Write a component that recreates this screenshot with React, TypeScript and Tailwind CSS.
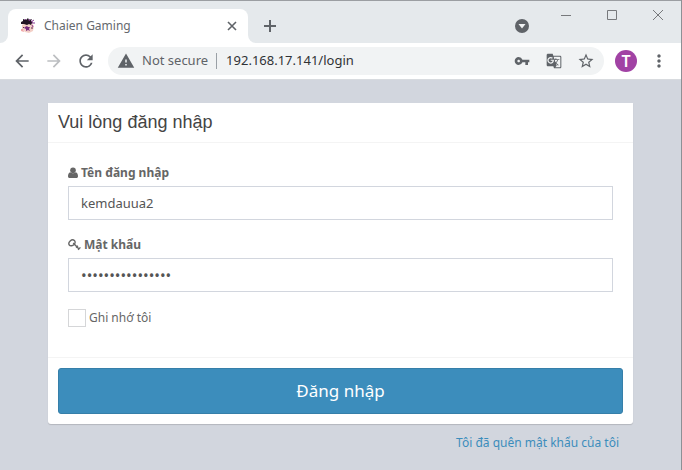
import { useState } from 'react';
import type { ReactNode } from 'react';
import { MdArrowBack, MdArrowForward, MdGTranslate, MdMoreVert, MdRefresh, MdStarBorder, MdVpnKey, MdWarning } from 'react-icons/md';

function IconButton({ label, className = '', children }: { label: string; className?: string; children: ReactNode }) {
  return (
    <button type="button" aria-label={label} className={`flex shrink-0 items-center justify-center ${className}`}>
      {children}
    </button>
  );
}

function Favicon() {
  return (
    <svg viewBox="0 0 16 16" className="size-4 shrink-0" aria-hidden="true">
      <path d="M2 7 4 5l8 0 2 3-1 5-4 2-4-1-3-3 0-2z" fill="#f3cfc6" />
      <path d="M1 6 1 4l2-1 0-2 3 1 2-2 1 2 3-1-1 2 2 1-1 1-1 2-2-1-2 1-3-1-2 0z" fill="#231424" />
      <path d="m5 1 1 1M10 1 9 3M14 2l-3 2M12 5l3 0M12 7l1 2" stroke="#8d3a96" strokeWidth="1" />
      <path d="m5 9 2-1 1 1 2 0-1 2 1 2-2-1-2 1 0-2-2-1z" fill="#7b2b7f" />
      <path d="m11 10 2 0M3 9l1 1" stroke="#5a2b4c" strokeWidth="1" />
      <path d="M1 11h2l1 3-3-1z" fill="#f0a8a8" />
    </svg>
  );
}

function TabStrip() {
  return (
    <div className="flex h-[43px] border-t border-[#9b9ea2] bg-[#e5e9ec]">
      <div className="flex w-2 shrink-0 items-end bg-white">
        <span className="h-full w-full rounded-br-lg bg-[#e5e9ec]" />
      </div>
      <div className="mt-2 flex w-60 items-center rounded-t-lg bg-white pr-2 pl-3">
        <Favicon />
        <span className="ml-2 flex-1 text-[12px] text-[#65696e]">Chaien Gaming</span>
        <IconButton label="Close tab" className="size-4">
          <svg viewBox="0 0 16 16" className="size-4" stroke="#5f6368" strokeWidth="1.6"><path d="m4 4 8 8M12 4l-8 8" /></svg>
        </IconButton>
      </div>
      <div className="w-2 shrink-0 bg-white">
        <span className="block h-full w-full rounded-bl-lg bg-[#e5e9ec]" />
      </div>
      <IconButton label="New tab" className="mt-[17px] ml-[6px] size-4 self-start">
        <svg viewBox="0 0 16 16" className="size-4" stroke="#5f6368" strokeWidth="2"><path d="M8 2v12M2 8h12" /></svg>
      </IconButton>
      <div className="flex-1" />
      <IconButton label="Search tabs" className="mt-[17px] size-4 self-start">
        <svg viewBox="0 0 16 16" className="size-4"><circle cx="8" cy="8" r="7" fill="#5f6368" /><path d="M4.500 6h7L8 10.500z" fill="#f1f3f4" /></svg>
      </IconButton>
      <div className="flex h-7 pl-[13px] text-[#77797c]">
        <IconButton label="Minimize" className="w-[46px]">
          <svg viewBox="0 0 12 12" className="size-3" stroke="currentColor"><path d="M1 6.500h10" /></svg>
        </IconButton>
        <IconButton label="Maximize" className="w-[46px]">
          <svg viewBox="0 0 12 12" className="size-3" fill="none" stroke="currentColor"><path d="M1.500 1.500h9v9h-9z" /></svg>
        </IconButton>
        <IconButton label="Close" className="w-[46px]">
          <svg viewBox="0 0 12 12" className="size-3" stroke="currentColor"><path d="m1 1 10 10M11 1 1 11" /></svg>
        </IconButton>
      </div>
    </div>
  );
}

function Toolbar() {
  return (
    <div className="flex h-[37px] items-center border-b border-[#d8dbdf] bg-white px-3 text-[#5f6368]">
      <IconButton label="Back" className="size-5"><MdArrowBack size={20} /></IconButton>
      <IconButton label="Forward" className="ml-3 size-5 text-[#bcbec1]"><MdArrowForward size={20} /></IconButton>
      <IconButton label="Reload" className="ml-3 size-5"><MdRefresh size={20} /></IconButton>
      <div className="ml-3 flex h-7 flex-1 items-center rounded-full bg-[#f1f3f4] px-[9px]">
        <MdWarning size={18} className="shrink-0" />
        <span className="ml-[7px] shrink-0 text-[13px]">Not secure</span>
        <span className="mr-[9px] ml-2 h-4 w-px shrink-0 bg-[#9aa0a6]" />
        <input
          aria-label="Address"
          defaultValue="192.168.17.141/login"
          className="w-0 min-w-0 flex-1 bg-transparent text-[13px] text-[#303236] outline-none"
        />
        <IconButton label="Saved password" className="size-4"><MdVpnKey size={16} /></IconButton>
        <IconButton label="Translate" className="ml-4 size-4"><MdGTranslate size={16} /></IconButton>
        <IconButton label="Bookmark" className="ml-[15px] size-[18px]"><MdStarBorder size={18} /></IconButton>
      </div>
      <IconButton label="Profile" className="ml-[11px] size-[22px] rounded-full bg-[#a142a4] text-[16px] font-semibold text-white">T</IconButton>
      <IconButton label="Menu" className="ml-3 size-5"><MdMoreVert size={20} /></IconButton>
    </div>
  );
}

function UserIcon() {
  return (
    <svg viewBox="0 0 10 12" className="h-3 w-[10px]" fill="currentColor" aria-hidden="true">
      <circle cx="5" cy="3.200" r="2.800" />
      <path d="M2.300 5.200C.6 5.400 0 7.400 0 9.200 0 10.300.7 11 1.600 11h6.800c.9 0 1.600-.7 1.600-1.800 0-1.800-.6-3.800-2.300-4-1.500 1.500-3.900 1.500-5.400 0z" />
    </svg>
  );
}

function KeyIcon() {
  return (
    <svg viewBox="0 0 13 12" className="h-3 w-[13px]" fill="none" stroke="currentColor" strokeWidth="1.400" aria-hidden="true">
      <path d="M1.300 6C.3 4.700 1 3.200 2.200 2 3.500.8 5.300.6 6.400 1.600c1.100 1 .9 2.700-.3 3.900C4.700 6.800 2.400 7.400 1.300 6z" />
      <path d="m5.200 4 6 6.300M8.200 8.700l1.700-1.900M10.100 10.900l2.300-2.500" />
    </svg>
  );
}

const inputClass = 'h-[34px] w-full border border-[#d2d6de] bg-white px-3 text-[#555555] outline-none';
const labelClass = 'mb-[3px] flex h-5 items-center gap-[3px] text-[12px] font-bold text-[#666666]';

function LoginForm() {
  const [remember, setRemember] = useState(false);
  return (
    <form onSubmit={(event) => event.preventDefault()} className="rounded-b-[3px] bg-white shadow-[0_1px_1px_rgba(0,0,0,0.15)]">
      <header className="border-b border-[#f4f4f4] px-[10px] py-[10px]">
        <h1 className="font-['Liberation_Sans',Arial,sans-serif] text-[18px] leading-[19px] text-[#444444]">Vui lòng đăng nhập</h1>
      </header>
      <div className="px-5 pt-5 pb-[29px]">
        <label htmlFor="username" className={labelClass}><UserIcon />Tên đăng nhập</label>
        <input id="username" defaultValue="kemdauua2" className={`text-[13px] ${inputClass}`} />
        <label htmlFor="password" className={`mt-[15px] ${labelClass}`}><KeyIcon />Mật khẩu</label>
        <input id="password" type="password" defaultValue="abcdefghijklmnop" className={`text-[15px] ${inputClass}`} />
        <div className="mt-4 flex h-5 items-center gap-[3px]">
          <input
            id="remember"
            type="checkbox"
            checked={remember}
            onChange={(event) => setRemember(event.target.checked)}
            className="size-[18px] appearance-none border border-[#d5d6d8] bg-white checked:bg-[#3c8dbc]"
          />
          <label htmlFor="remember" className="text-[12px] text-[#666666]">Ghi nhớ tôi</label>
        </div>
      </div>
      <footer className="border-t border-[#f4f4f4] p-[10px]">
        <button type="submit" className="h-[46px] w-full rounded-[3px] border border-[#367fa9] bg-[#3c8dbc] text-[17px] text-white">Đăng nhập</button>
      </footer>
    </form>
  );
}

export default function App() {
  return (
    <div className="flex min-h-screen flex-col border-r border-[#8d9095] bg-[#d2d6de] font-['Noto_Sans','Open_Sans',sans-serif]">
      <TabStrip />
      <Toolbar />
      <main className="px-12 pt-[23px]">
        <LoginForm />
        <div className="mt-[9px] pr-[14px] text-right text-[12px] leading-5">
          <a href="#forgot" className="text-[#3c8dbc]">Tôi đã quên mật khẩu của tôi</a>
        </div>
      </main>
    </div>
  );
}
